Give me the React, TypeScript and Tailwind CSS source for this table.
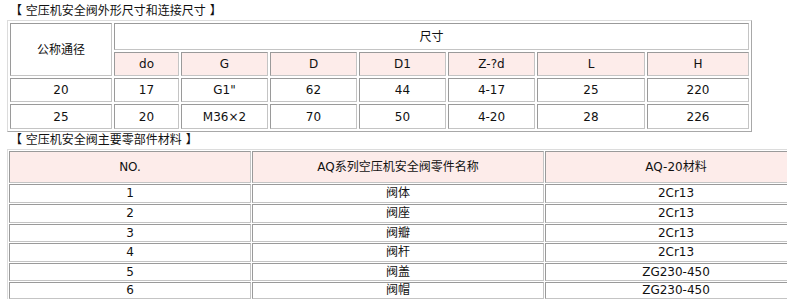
const dims = [
  ['20', '17', 'G1"', '62', '44', '4-17', '25', '220'],
  ['25', '20', 'M36×2', '70', '50', '4-20', '28', '226'],
]

const parts = [
  ['1', '阀体', '2Cr13'],
  ['2', '阀座', '2Cr13'],
  ['3', '阀瓣', '2Cr13'],
  ['4', '阀杆', '2Cr13'],
  ['5', '阀盖', 'ZG230-450'],
  ['6', '阀帽', 'ZG230-450'],
]

// row heights measured off the picture, borders included
const partRowH = ['h-[19px]', 'h-[19px]', 'h-[18px]', 'h-[19px]', 'h-[18px]', 'h-[17px]']

const cell = 'border border-t-[#9a9a9a] border-l-[#9a9a9a] border-b-[#c4c4c4] border-r-[#c4c4c4] p-0 text-center align-middle font-normal'
const pink = 'bg-[#fdecea]'

export default function App() {
  return (
    <div
      className="w-[787px] h-[299px] overflow-hidden bg-white pl-[7px] text-[12px] text-[#111]"
      style={{ fontFamily: '"DejaVu Sans", "Noto Sans CJK SC", sans-serif' }}
    >
      <div className="mt-[2px] h-[18px] leading-[18px] pl-[3px]">【 空压机安全阀外形尺寸和连接尺寸 】</div>

      <table className="table-fixed border-separate border-spacing-[2px] border border-t-[#dcdcdc] border-l-[#dcdcdc] border-b-[#a8a8a8] border-r-[#a8a8a8] w-[745px]">
        <colgroup>
          <col className="w-[102px]" />
          <col className="w-[65px]" />
          <col className="w-[87px]" />
          <col className="w-[87px]" />
          <col className="w-[87px]" />
          <col className="w-[87px]" />
          <col className="w-[108px]" />
          <col className="w-[102px]" />
        </colgroup>
        <thead>
          <tr className="h-[27px]">
            <th rowSpan={2} className={cell}>公称通径</th>
            <th colSpan={7} className={cell}>尺寸</th>
          </tr>
          <tr className="h-[24px]">
            {['do', 'G', 'D', 'D1', 'Z-?d', 'L', 'H'].map(h => (
              <th key={h} className={`${cell} ${pink}`}>{h}</th>
            ))}
          </tr>
        </thead>
        <tbody>
          {dims.map((r, i) => (
            <tr key={i} className={i === 0 ? 'h-[24px]' : 'h-[25px]'}>
              {r.map((v, j) => (
                <td key={j} className={cell}>{v}</td>
              ))}
            </tr>
          ))}
        </tbody>
      </table>

      <div className="h-[17px] leading-[17px] pl-[3px]">【 空压机安全阀主要零部件材料 】</div>

      <table className="table-fixed border-separate border-spacing-[1px] border border-t-[#dcdcdc] border-l-[#dcdcdc] border-b-[#a8a8a8] border-r-[#a8a8a8] w-[800px]">
        <colgroup>
          <col className="w-[242px]" />
          <col className="w-[292px]" />
          <col className="w-[262px]" />
        </colgroup>
        <thead>
          <tr className="h-[32px]">
            <th className={`${cell} ${pink}`}>NO.</th>
            <th className={`${cell} ${pink}`}>AQ系列空压机安全阀零件名称</th>
            <th className={`${cell} ${pink}`}>AQ-20材料</th>
          </tr>
        </thead>
        <tbody>
          {parts.map((p, i) => (
            <tr key={p[0]} className={partRowH[i]}>
              {p.map((v, j) => (
                <td key={j} className={`${cell} leading-[15px]`}>{v}</td>
              ))}
            </tr>
          ))}
        </tbody>
      </table>
    </div>
  )
}
